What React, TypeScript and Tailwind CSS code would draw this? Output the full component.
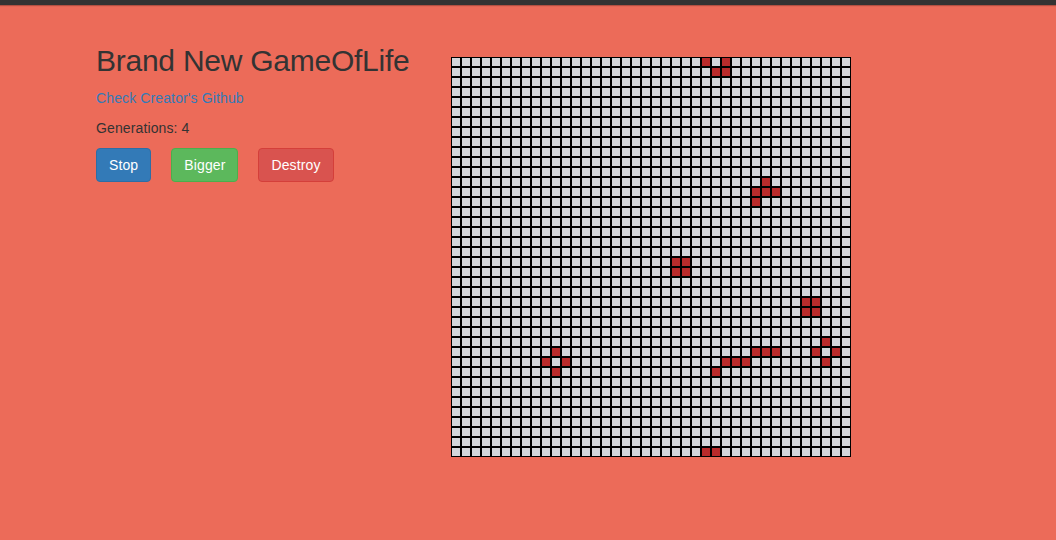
import React from "react";

const ALIVE: Array<[number, number]> = [
  [0, 25], [0, 27], [1, 26], [1, 27],
  [39, 25], [39, 26],
  [12, 31], [13, 30], [13, 31], [13, 32], [14, 30],
  [20, 22], [20, 23], [21, 22], [21, 23],
  [24, 35], [24, 36], [25, 35], [25, 36],
  [28, 37], [29, 36], [29, 38], [30, 37],
  [29, 10], [30, 9], [30, 11], [31, 10],
  [29, 30], [29, 31], [29, 32],
  [30, 27], [30, 28], [30, 29],
  [31, 26],
];

const aliveSet = new Set(ALIVE.map(([r, c]) => r * 40 + c));

export default function App() {
  const cells = [];
  for (let i = 0; i < 1600; i++) {
    const on = aliveSet.has(i);
    cells.push(
      <div
        key={i}
        className={
          on
            ? "w-[10px] h-[10px] border border-black bg-[#b92b2b]"
            : "w-[10px] h-[10px] border border-black bg-[#d3d6da]"
        }
      />
    );
  }
  return (
    <div
      className="w-[1056px] h-[540px] bg-[#ec6b59] overflow-hidden"
      style={{ fontFamily: '"Liberation Sans", Arial, sans-serif' }}
    >
      <div className="h-[5px] bg-[#333333] shadow-[0_1px_1px_rgba(0,0,0,0.25)]" />
      <div className="flex pl-[96px]">
        <div className="w-[355px] pt-[39px]">
          <h1 className="text-[30px] leading-[33px] tracking-[-0.25px] text-[#333333] m-0">
            Brand New GameOfLife
          </h1>
          <div className="mt-[11px] text-[14px] leading-[20px] tracking-[0.12px] text-[#337ab7]">
            Check Creator's Github
          </div>
          <div className="mt-[10px] text-[14px] leading-[20px] tracking-[0.12px] text-[#333333]">
            Generations: 4
          </div>
          <div className="mt-[10px] flex gap-[20px] tracking-[0.12px]">
            <button className="h-[34px] px-[12px] text-[14px] text-white bg-[#337ab7] border border-[#2e6da4] rounded-[4px]">
              Stop
            </button>
            <button className="h-[34px] px-[12px] text-[14px] text-white bg-[#5cb85c] border border-[#4cae4c] rounded-[4px]">
              Bigger
            </button>
            <button className="h-[34px] px-[12px] text-[14px] text-white bg-[#d9534f] border border-[#d43f3a] rounded-[4px]">
              Destroy
            </button>
          </div>
        </div>
        <div className="mt-[52px]">
          <div className="grid grid-cols-[repeat(40,10px)] w-[400px]">{cells}</div>
        </div>
      </div>
    </div>
  );
}
